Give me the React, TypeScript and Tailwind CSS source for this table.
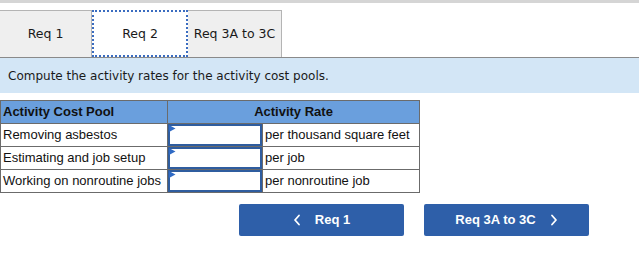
import React from "react";

const rows = [
  { pool: "Removing asbestos", unit: "per thousand square feet" },
  { pool: "Estimating and job setup", unit: "per job" },
  { pool: "Working on nonroutine jobs", unit: "per nonroutine job" },
];

function Chevron({ dir }: { dir: "left" | "right" }) {
  return (
    <svg width="8" height="12" viewBox="0 0 8 12" fill="none">
      <path
        d={dir === "left" ? "M6 1.5 L2 6 L6 10.5" : "M2 1.5 L6 6 L2 10.5"}
        stroke="white"
        strokeWidth="1.8"
        strokeLinecap="round"
        strokeLinejoin="round"
      />
    </svg>
  );
}

export default function App() {
  return (
    <div className="w-[639px] h-[268px] bg-white overflow-hidden relative">
      <div className="h-[3px] bg-[#d5d5d5]" />
      {/* tabs */}
      <div className="flex mt-[7px] h-[47px] font-['DejaVu_Sans',sans-serif] text-[12.5px] text-[#1a1a1a]">
        <div className="w-[92px] bg-[#efefef] border-t border-r border-[#b4b4b4] flex items-center justify-center pt-[1px]">
          Req 1
        </div>
        <div className="w-[96px] bg-white border-2 border-dotted border-[#3a6cc0] flex items-center justify-center pt-[1px]">
          Req 2
        </div>
        <div className="w-[94px] bg-[#efefef] border-t border-r border-[#b4b4b4] flex items-center justify-center pt-[1px]">
          Req 3A to 3C
        </div>
      </div>
      {/* instructions */}
      <div className="h-[36px] bg-[#d3e6f6] border-t border-[#8a8a8a] flex items-center pl-[8px] font-['DejaVu_Sans',sans-serif] text-[12px] text-[#1a1a1a]">
        Compute the activity rates for the activity cost pools.
      </div>
      {/* table */}
      <table className="mt-[7px] border-collapse font-['Liberation_Sans',Arial,sans-serif] text-[13px] text-[#111]">
        <thead>
          <tr className="h-[23px] bg-[#6a9fdd]">
            <th className="w-[167px] border border-[#6b6b6b] text-left font-bold pl-[2px] pr-0 py-0 leading-[20px]">
              Activity Cost Pool
            </th>
            <th colSpan={2} className="border border-[#6b6b6b] text-center font-bold p-0 leading-[20px]">
              Activity Rate
            </th>
          </tr>
        </thead>
        <tbody>
          {rows.map((r) => (
            <tr key={r.pool} className="h-[23px]">
              <td className="w-[167px] border border-[#6b6b6b] pl-[2px] p-0 leading-[20px] whitespace-nowrap">
                {r.pool}
              </td>
              <td className="w-[95px] border border-[#6b6b6b] p-0 relative">
                <div className="h-[22px] border-2 border-[#2f5d9f] bg-white" />
                <svg className="absolute left-[1px] top-[1px]" width="7" height="8" viewBox="0 0 7 8">
                  <path d="M0 0 L6.5 3.5 L0 7 Z" fill="#2f6ac4" />
                </svg>
              </td>
              <td className="w-[157px] border border-[#6b6b6b] pl-[2px] p-0 leading-[20px] whitespace-nowrap">
                {r.unit}
              </td>
            </tr>
          ))}
        </tbody>
      </table>
      {/* navigation */}
      <div className="flex gap-[20px] pl-[239px] mt-[11px] font-['Liberation_Sans',Arial,sans-serif] text-[13px] font-bold text-white">
        <button className="w-[165px] h-[32px] bg-[#2e5fa9] rounded-[2px] flex items-center justify-center gap-[14px]">
          <Chevron dir="left" />
          <span>Req 1</span>
        </button>
        <button className="w-[165px] h-[32px] bg-[#2e5fa9] rounded-[2px] flex items-center justify-center gap-[14px]">
          <span>Req 3A to 3C</span>
          <Chevron dir="right" />
        </button>
      </div>
    </div>
  );
}
